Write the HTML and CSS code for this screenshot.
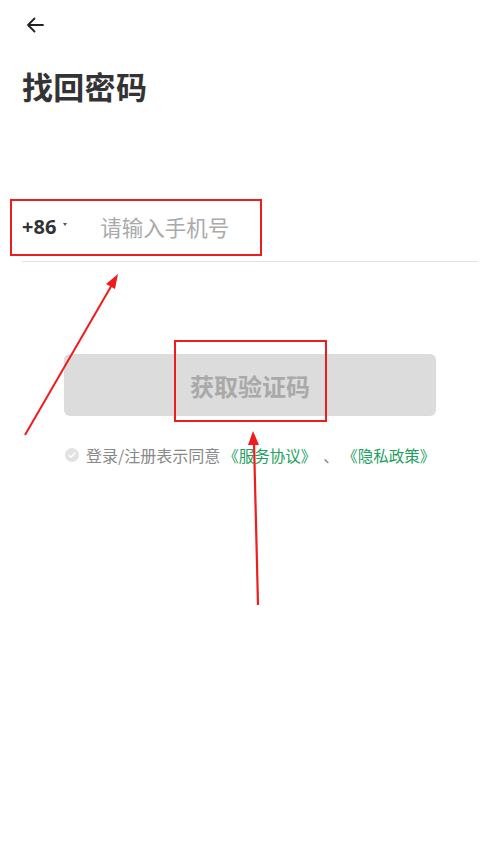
FILE: index.html
```html
<!DOCTYPE html>
<html lang="zh-CN">
<head>
<meta charset="utf-8">
<title>找回密码</title>
<link rel="stylesheet" href="styles.css">
</head>
<body>
<div class="page">
  <div class="topbar">
    <svg class="back" width="18" height="16" viewBox="0 0 18 16">
      <path d="M17 8H2M8.5 1.5L2 8l6.5 6.5" fill="none" stroke="#222" stroke-width="1.8" stroke-linecap="round" stroke-linejoin="round"/>
    </svg>
  </div>
  <h1 class="title">找回密码</h1>
  <div class="phone-row">
    <span class="code">+86</span>
    <span class="caret"></span>
    <span class="placeholder">请输入手机号</span>
  </div>
  <div class="divider"></div>
  <div class="btn-wrap">
    <div class="btn">获取验证码</div>
  </div>
  <div class="agree">
    <svg class="check" width="14" height="14" viewBox="0 0 14 14">
      <circle cx="7" cy="7" r="7" fill="#e2e2e2"/>
      <path d="M4 7.2l2 2 4-4.2" fill="none" stroke="#fff" stroke-width="1.4" stroke-linecap="round" stroke-linejoin="round"/>
    </svg>
    <span class="agree-text">登录/注册表示同意</span>
    <span class="link first">《服务协议》</span>
    <span class="sep">、</span>
    <span class="link">《隐私政策》</span>
  </div>
</div>
<svg class="annot" width="500" height="859" viewBox="0 0 500 859">
  <rect x="11" y="200" width="250" height="55" fill="none" stroke="#ee1c1c" stroke-width="2"/>
  <rect x="175" y="341" width="151" height="80" fill="none" stroke="#ee1c1c" stroke-width="2"/>
  <line x1="25" y1="435" x2="113" y2="283" stroke="#ee1c1c" stroke-width="2"/>
  <polygon points="118,274 106,284 115,289" fill="#ee1c1c"/>
  <line x1="258" y1="605" x2="254" y2="442" stroke="#ee1c1c" stroke-width="2.2"/>
  <polygon points="253,431 248,445 259,445" fill="#ee1c1c"/>
</svg>
</body>
</html>
```
FILE: styles.css
```css
html, body {
  margin: 0;
  padding: 0;
  background: #fff;
}
body {
  font-family: "Noto Sans CJK SC", "Noto Sans", sans-serif;
  color: #333;
  width: 500px;
  height: 859px;
  position: relative;
  overflow: hidden;
}
.page {
  padding: 0 22px;
}
.topbar {
  height: 50px;
  display: flex;
  align-items: center;
  padding-left: 4px;
}
.back {
  display: block;
}
.title {
  margin: 13px 0 0 0;
  font-size: 31px;
  line-height: 46px;
  font-weight: 700;
  color: #333;
  letter-spacing: 0.3px;
}
.phone-row {
  margin-top: 91px;
  height: 52px;
  padding-bottom: 9px;
  display: flex;
  align-items: center;
}
.code {
  font-family: "Noto Sans", sans-serif;
  font-size: 20px;
  font-weight: 700;
  color: #333;
}
.caret {
  width: 0;
  height: 0;
  border-left: 2.5px solid transparent;
  border-right: 2.5px solid transparent;
  border-top: 3px solid #555;
  margin: 0 0 3px 7px;
}
.placeholder {
  margin-left: 33px;
  font-size: 21.5px;
  color: #aaa;
}
.divider {
  height: 1px;
  background: #e3e3e3;
}
.btn-wrap {
  padding: 92px 42px 0;
}
.btn {
  height: 62px;
  border-radius: 6px;
  background: #dcdcdc;
  color: #a9a9a9;
  font-size: 24px;
  font-weight: 700;
  display: flex;
  align-items: center;
  justify-content: center;
}
.agree {
  margin-top: 28px;
  padding-left: 43px;
  display: flex;
  align-items: center;
  font-size: 16px;
  line-height: 22px;
  color: #888;
}
.check {
  margin-right: 7px;
}
.link {
  color: #20a05c;
  font-size: 15.5px;
}
.link.first {
  margin-left: 3px;
}
.sep {
  margin: 0 3px 0 7px;
  color: #888;
}
.annot {
  position: absolute;
  left: 0;
  top: 0;
  pointer-events: none;
}
```
